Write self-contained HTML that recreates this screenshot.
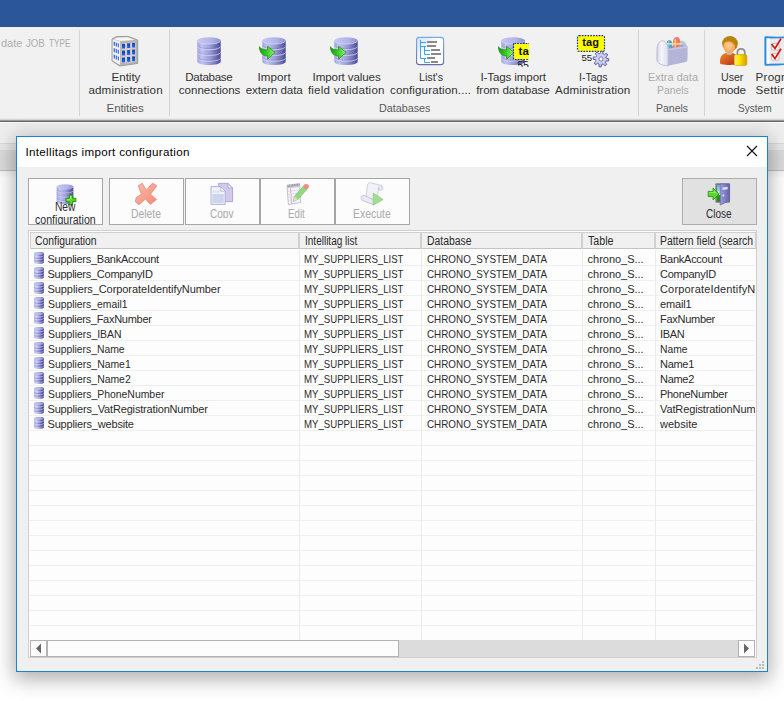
<!DOCTYPE html>
<html><head><meta charset="utf-8">
<style>
*{box-sizing:border-box;margin:0;padding:0}
html,body{width:784px;height:701px;overflow:hidden;background:#fff;font-family:"Liberation Sans",sans-serif;}
#root{position:relative;width:784px;height:701px;overflow:hidden;background:#fff}
.abs{position:absolute}
.t{position:absolute;white-space:nowrap;line-height:1;transform-origin:0 50%}
#topbar{left:0;top:0;width:784px;height:27px;background:#2b579a}
#ribbon{left:0;top:27px;width:784px;height:93px;background:#f1f1f1}
#ribline{left:0;top:118px;width:784px;height:5px;background:linear-gradient(#ebebeb 0 1px,#d6d6d6 1px 2px,#9c9c9c 2px 3px,#666 3px 4px,#f9f9f9 4px 5px)}
#under1{left:0;top:123px;width:784px;height:20px;background:linear-gradient(#ededed,#f1f1f1)}
#under1b{left:0;top:143px;width:784px;height:7px;background:#e9e9e9;border-top:1px solid #dadada}
#under2{left:0;top:150px;width:784px;height:21px;background:#dcdcdc;border-bottom:1px solid #bdbdbd}
#under3{left:0;top:171px;width:784px;height:8px;background:linear-gradient(#f3f3f3,#fff)}
.sep{position:absolute;top:30px;width:1px;height:86px;background:#d4d4d4}
#dlg{left:16px;top:136px;width:752px;height:536px;background:#f0f0f0;border:1px solid #1a82d8;box-shadow:0 5px 19px 2px rgba(0,0,0,0.33)}
#title{left:17px;top:137px;width:750px;height:30px;background:#fff}
.btn{position:absolute;top:178px;height:47px;width:75px;border:1px solid #a6a6a6;background:#fcfcfc}
#grid{left:28px;top:230px;width:729px;height:428px;background:#fdfdfd;border:1px solid #cfcfcf}
.hd{position:absolute;top:232px;height:17px;background:#f0f0f0;border:1px solid #d0d0d0;border-bottom-color:#c4c4c4}
.vl{position:absolute;top:250px;width:1px;height:390px;background:#ebebeb}
.hl{position:absolute;left:29px;width:726px;height:1px;background:#efefef}
.clip{position:absolute;left:0;top:0;overflow:hidden}
.clip .t{}
</style></head><body>
<div id="root">
<svg width="0" height="0" style="position:absolute">
<defs>
<linearGradient id="gdb" x1="0" x2="1" y1="0" y2="0"><stop offset="0" stop-color="#a2a4dc"/><stop offset=".2" stop-color="#c0c2f2"/><stop offset=".55" stop-color="#9a9cd6"/><stop offset="1" stop-color="#4a4a94"/></linearGradient>
<linearGradient id="gdbt" x1="0" x2="1" y1="0" y2="0"><stop offset="0" stop-color="#c4c6f2"/><stop offset=".6" stop-color="#b3b5ea"/><stop offset="1" stop-color="#8e90cc"/></linearGradient>
<linearGradient id="ggr" x1="0" x2="1" y1="0" y2="0"><stop offset="0" stop-color="#119a0c"/><stop offset=".5" stop-color="#3fcb2a"/><stop offset="1" stop-color="#92f56a"/></linearGradient>
<linearGradient id="glist" x1="0" x2="0" y1="0" y2="1"><stop offset="0" stop-color="#79a8ea"/><stop offset="1" stop-color="#666cb0"/></linearGradient>
<linearGradient id="glistf" x1="0" x2="1" y1="0" y2="1"><stop offset="0" stop-color="#cfe0fa"/><stop offset=".45" stop-color="#ffffff"/><stop offset="1" stop-color="#ffffff"/></linearGradient>
<linearGradient id="gsdb" x1="0" x2="1" y1="0" y2="0"><stop offset="0" stop-color="#a8aae4"/><stop offset=".22" stop-color="#c8caf6"/><stop offset=".55" stop-color="#8a8ccc"/><stop offset="1" stop-color="#363680"/></linearGradient>
<!-- big db cylinder 24x28, origin (0,0) -->
<g id="bdb">
 <path d="M0.3,3.4 V24.4 C0.3,26.6 5.5,28 12,28 C18.5,28 23.7,26.6 23.7,24.4 V3.4 Z" fill="url(#gdb)"/>
 <ellipse cx="12" cy="3.5" rx="11.7" ry="3.2" fill="url(#gdbt)"/>
 <path d="M0.5,3.9 C2,6.3 7,7 12,7 C17,7 22,6.3 23.5,3.9" fill="none" stroke="#dcdefa" stroke-width="0.9" opacity=".85"/>
 <g fill="none" stroke-width="1">
  <path d="M0.5,8.8 C2,11 7,11.6 12,11.6 C17,11.6 22,11 23.5,8.8" stroke="#6464ac" opacity=".28"/>
  <path d="M0.5,9.8 C2,12 7,12.6 12,12.6 C17,12.6 22,12 23.5,9.8" stroke="#d8daf8" opacity=".8"/>
  <path d="M0.5,14.6 C2,16.8 7,17.4 12,17.4 C17,17.4 22,16.8 23.5,14.6" stroke="#6464ac" opacity=".28"/>
  <path d="M0.5,15.6 C2,17.8 7,18.4 12,18.4 C17,18.4 22,17.8 23.5,15.6" stroke="#d8daf8" opacity=".8"/>
  <path d="M0.5,20.4 C2,22.6 7,23.2 12,23.2 C17,23.2 22,22.6 23.5,20.4" stroke="#6464ac" opacity=".28"/>
  <path d="M0.5,21.4 C2,23.6 7,24.2 12,24.2 C17,24.2 22,23.6 23.5,21.4" stroke="#d8daf8" opacity=".7"/>
 </g>
</g>
<!-- green arrow 16x13.5 origin (0,0): tail top-left curving to point right -->
<g id="garrow">
 <path d="M0.3,0.6 C2,3.6 5,4.2 8.6,3.8 V0.2 L16,6.4 L8.6,13.2 V9.6 C4.5,10.6 0.8,7.5 0.3,0.6 Z" fill="url(#ggr)" stroke="#15900f" stroke-width="0.7" stroke-linejoin="round"/>
</g>
<!-- small db 10x12 -->
<g id="sdb">
 <path d="M0.2,1.5 C0.2,0.5 2,0.1 5,0.1 C8,0.1 9.8,0.5 9.8,1.5 V10.2 C9.8,11.2 8,11.8 5,11.8 C2,11.8 0.2,11.2 0.2,10.2 Z" fill="url(#gsdb)"/>
 <ellipse cx="5" cy="1.6" rx="4.7" ry="1.4" fill="url(#gdbt)"/>
 <g fill="none" stroke-width=".9"><path d="M0.4,3.8 C1.4,4.7 3,4.9 5,4.9 C7,4.9 8.6,4.7 9.6,3.8" stroke="#dcdefa" opacity=".75"/>
 <path d="M0.4,6.5 C1.4,7.4 3,7.6 5,7.6 C7,7.6 8.6,7.4 9.6,6.5" stroke="#dcdefa" opacity=".7"/>
 <path d="M0.4,9.2 C1.4,10.1 3,10.3 5,10.3 C7,10.3 8.6,10.1 9.6,9.2" stroke="#dcdefa" opacity=".6"/>
 <path d="M0.4,5.6 C1.4,6.5 3,6.7 5,6.7 C7,6.7 8.6,6.5 9.6,5.6 M0.4,8.3 C1.4,9.2 3,9.4 5,9.4 C7,9.4 8.6,9.2 9.6,8.3" stroke="#5a5aa6" opacity=".35"/></g>
</g>
</defs></svg>

<div id="topbar" class="abs"></div>
<div id="ribbon" class="abs"></div>
<div id="ribline" class="abs"></div>
<div id="under1" class="abs"></div><div id="under1b" class="abs"></div>
<div id="under2" class="abs"></div><div id="under3" class="abs"></div>
<div class="sep" style="left:79px"></div><div class="sep" style="left:169px"></div>
<div class="sep" style="left:638px"></div><div class="sep" style="left:704px"></div>
<!-- Entity building -->
<svg class="abs" style="left:110px;top:34px" width="30" height="34" viewBox="110 34 30 34">
 <defs><linearGradient id="gbl" x1="0" x2="0" y1="0" y2="1"><stop offset="0" stop-color="#0a3fc8"/><stop offset="1" stop-color="#1a66ee"/></linearGradient></defs>
 <path d="M112,39 L116.5,36.6 L128,36.4 L137.7,40 L137.7,63.4 L119.6,66 L112,61 Z" fill="#b4b4b4" stroke="#8e8e8e" stroke-width=".8"/>
 <path d="M113.8,39.2 L117,37.5 L127.6,37.3 L135,40 L120.3,41 Z" fill="#f6f6f6"/>
 <path d="M112.6,39.2 L120.1,41.6 L120.1,65 L112.6,60.4 Z" fill="#f2f2f4"/>
 <path d="M120.9,41.6 L137,40.6 L137,62.8 L120.9,65 Z" fill="#b7b5b1"/><path d="M121.6,43.4 L135.6,42.4 L135.6,62 L121.6,63 Z" fill="#d6cdbf"/>
 <g fill="url(#gbl)">
  <rect x="122" y="43.9" width="3" height="4.6"/><rect x="127.1" y="43.4" width="3" height="4.6"/><rect x="132.1" y="42.9" width="2.9" height="4.6"/>
  <rect x="122" y="50.6" width="3" height="4.8"/><rect x="127.1" y="50.1" width="3" height="4.8"/><rect x="132.1" y="49.6" width="2.9" height="4.8"/>
  <rect x="122" y="57.6" width="3" height="4.8"/><rect x="127.1" y="57" width="3" height="4.8"/><rect x="132.1" y="56.4" width="2.9" height="4.8"/>
  <g opacity=".85"><path d="M113.7,41.6 l1.2,.4 v4 l-1.2,-.5z M115.7,42.4 l1.2,.4 v4 l-1.2,-.5z M117.7,43.2 l1.2,.4 v4 l-1.2,-.5z"/>
  <path d="M113.7,48 l1.2,.4 v4 l-1.2,-.5z M115.7,48.8 l1.2,.4 v4 l-1.2,-.5z M117.7,49.6 l1.2,.4 v4 l-1.2,-.5z"/>
  <path d="M113.7,54.4 l1.2,.5 v4 l-1.2,-.6z M115.7,55.3 l1.2,.5 v4 l-1.2,-.6z M117.7,56.2 l1.2,.5 v4 l-1.2,-.6z"/></g>
 </g>
</svg>
<!-- DB connections -->
<svg class="abs" style="left:197px;top:36.9px" width="24" height="28.5" viewBox="0 0 24 28.5"><use href="#bdb"/></svg>
<!-- Import extern -->
<svg class="abs" style="left:262px;top:36.9px" width="24" height="28.5" viewBox="0 0 24 28.5"><use href="#bdb"/></svg>
<svg class="abs" style="left:258.6px;top:45.8px" width="17" height="14" viewBox="0 0 17 14"><use href="#garrow"/></svg>
<!-- Import values -->
<svg class="abs" style="left:334px;top:36.9px" width="24" height="28.5" viewBox="0 0 24 28.5"><use href="#bdb"/></svg>
<svg class="abs" style="left:330.3px;top:45.8px" width="17" height="14" viewBox="0 0 17 14"><use href="#garrow"/></svg>
<!-- List's config -->
<svg class="abs" style="left:415px;top:36px" width="30" height="30" viewBox="415 36 30 30">
 <rect x="416.6" y="37.4" width="27" height="27.2" rx="2.6" fill="url(#glistf)" stroke="url(#glist)" stroke-width="1.1"/>
 <g stroke="#3ea2f4" stroke-width="1" fill="none"><path d="M420.5,40 V58.5 H426 M420.5,42.5 H426 M420.5,46.5 H426 M424.5,46.5 V54.5 H430 M424.5,50.5 H430 M424.5,58.5 V62.5 H430"/></g>
 <g fill="#8a8a8a"><rect x="427" y="41" width="10" height="2"/><rect x="427" y="45" width="9" height="2"/><rect x="431" y="49" width="9" height="2"/><rect x="431" y="53" width="10" height="2"/><rect x="427" y="57" width="8" height="2"/><rect x="431" y="61" width="7" height="2"/></g>
</svg>
<!-- I-Tags import -->
<svg class="abs" style="left:501px;top:36.9px" width="24" height="28.5" viewBox="0 0 24 28.5"><use href="#bdb"/></svg>
<svg class="abs" style="left:497.7px;top:45.8px" width="17" height="14" viewBox="0 0 17 14"><use href="#garrow"/></svg>
<svg class="abs" style="left:512px;top:42px" width="17" height="25" viewBox="512 42 17 25">
 <rect x="513.5" y="43.5" width="17" height="16" rx="1" fill="#ffff00" stroke="#0a2fa0" stroke-width="1.2" stroke-dasharray="1.6 1.2"/>
 <text x="518.6" y="55.4" font-family="Liberation Sans" font-weight="bold" font-size="11.5" fill="#111">ta</text>
 <text x="517.6" y="69.4" font-family="Liberation Sans" font-size="10" fill="#1a1a1a">55.</text>
</svg>
<!-- I-Tags Admin -->
<svg class="abs" style="left:575px;top:33px" width="36" height="35" viewBox="575 33 36 35">
 <rect x="577.5" y="35.6" width="27" height="15.8" rx="1.6" fill="#ffff00" stroke="#0a2fa0" stroke-width="1.2" stroke-dasharray="1.6 1.2"/>
 <text x="582.3" y="45.9" textLength="16.6" lengthAdjust="spacingAndGlyphs" font-family="Liberation Sans" font-weight="bold" font-size="11.6" fill="#111">tag</text>
 <text x="581.4" y="61" font-family="Liberation Sans" font-size="9.6" fill="#1a1a1a">55</text>
 <g transform="translate(601 59)">
  <path d="M-0.74,-5.35 L-0.19,-7.90 L2.02,-7.64 L1.97,-5.03 L3.26,-4.31 L5.45,-5.72 L6.83,-3.97 L4.95,-2.16 L5.35,-0.74 L7.90,-0.19 L7.64,2.02 L5.03,1.97 L4.31,3.26 L5.72,5.45 L3.97,6.83 L2.16,4.95 L0.74,5.35 L0.19,7.90 L-2.02,7.64 L-1.97,5.03 L-3.26,4.31 L-5.45,5.72 L-6.83,3.97 L-4.95,2.16 L-5.35,0.74 L-7.90,0.19 L-7.64,-2.02 L-5.03,-1.97 L-4.31,-3.26 L-5.72,-5.45 L-3.97,-6.83 L-2.16,-4.95 Z" fill="#c4c4e8" stroke="#5252a4" stroke-width=".9" stroke-linejoin="round"/>
  <path d="M-0.74,-5.35 L-0.19,-7.90 L2.02,-7.64 L1.97,-5.03 L3.26,-4.31 L5.45,-5.72 L6.83,-3.97 L4.95,-2.16 L5.35,-0.74 L7.90,-0.19 L7.64,2.02 L5.03,1.97 L4.31,3.26 L5.72,5.45 L3.97,6.83 L2.16,4.95 L0.74,5.35 L0.19,7.90 L-2.02,7.64 L-1.97,5.03 L-3.26,4.31 L-5.45,5.72 L-6.83,3.97 L-4.95,2.16 L-5.35,0.74 L-7.90,0.19 L-7.64,-2.02 L-5.03,-1.97 L-4.31,-3.26 L-5.72,-5.45 L-3.97,-6.83 L-2.16,-4.95 Z" fill="#d8d8f4" opacity=".6" transform="scale(.72) translate(-1,-1)"/>
  <circle r="2.1" fill="#fdfdff" stroke="#6c6cb4" stroke-width=".9"/>
 </g>
</svg>
<!-- Toolbox (disabled) -->
<svg class="abs" style="left:655px;top:34px" width="35" height="34" viewBox="655 34 35 34">
 <defs><linearGradient id="gcap" x1="0" x2="1"><stop offset="0" stop-color="#d2d2e8"/><stop offset=".4" stop-color="#f6f6fc"/><stop offset="1" stop-color="#dcdcee"/></linearGradient></defs>
 <path d="M675,52 C675,43 678.6,40.8 681.6,40.8 C685.6,41 687.4,45 687.4,49 V58 L675,58 Z" fill="#c2c2de"/>
 <path d="M667,49 L678.2,43 C680,44.4 683.4,45.4 686.8,46.2 L668,51Z" fill="#a2a2c8"/>
 <path d="M666.9,42 C666.9,39.8 671.7,39.8 671.9,42 L672.6,50 H667.4 Z" fill="#4aa4de"/><path d="M668,41.6 c.2,-.8 .8,-.8 1,0 l.3,8.4 h-1z" fill="#8ccaee"/>
 <path d="M672.9,42.4 C672.9,35.2 680.6,35.2 680.2,42.4 L678,49.6 H674 Z" fill="#f07c66"/><path d="M674.6,40.6 c.3,-2.6 1.5,-2.6 1.4,0 l-.5,8.4 h-.9z" fill="#fbd0c4"/>
 <rect x="667" y="43" width="14.8" height="1.7" fill="#f0dc74"/>
 <path d="M667,48.9 L687.4,46 V60 C687.4,61 686.8,61.8 685.8,62 L667,65.9 Z" fill="#b4b4d8"/>
 <path d="M667,48.9 L687.4,46 V47.4 L667,50.4 Z" fill="#c8c8e6"/>
 <path d="M656.9,50.4 C656.9,37.6 668.2,37.6 668.2,50.4 V65.9 C662,65.7 656.9,63 656.9,60Z" fill="url(#gcap)" stroke="#b4b4d6" stroke-width=".8"/>
</svg>
<!-- User mode -->
<svg class="abs" style="left:718px;top:34px" width="31" height="33" viewBox="718 34 31 33">
 <defs><linearGradient id="gbody" x1="0" x2="1" y1="0" y2="1"><stop offset="0" stop-color="#f28a2a"/><stop offset="1" stop-color="#b92a12"/></linearGradient>
 <radialGradient id="gface" cx=".45" cy=".45" r=".6"><stop offset="0" stop-color="#ffd39a"/><stop offset="1" stop-color="#f79a4c"/></radialGradient>
 <linearGradient id="glock" x1="0" x2="1" y1="0" y2="0"><stop offset="0" stop-color="#fff27a"/><stop offset=".4" stop-color="#ffe400"/><stop offset="1" stop-color="#d49c00"/></linearGradient></defs>
 <path d="M720,63 C719.6,56 723,52.6 729.4,52.6 C735.6,52.6 738,56 738,63 C738,65.6 720,65.6 720,63 Z" fill="url(#gbody)"/>
 <path d="M726.6,52.4 h5.6 l-.6,2.4 h-4.4z" fill="#a8c8e2"/>
 <ellipse cx="730" cy="43.6" rx="7.9" ry="7.6" fill="#b9840c"/>
 <ellipse cx="729.3" cy="46.4" rx="5.8" ry="6.8" fill="url(#gface)"/>
 <path d="M722.4,44 C723,38 729,36.4 733.6,39 C737,41 737.6,45 736.6,48.6 C735,45 733,42 729,41.6 C726,41.4 724,42.4 722.4,44 Z" fill="#b9840c"/>
 <path d="M737.4,56 V52.6 C737.4,47.6 744.8,47.6 744.8,52.6 V56" fill="none" stroke="#8e8e8e" stroke-width="1.7"/>
 <rect x="734.2" y="54.6" width="12.6" height="10.8" rx="1.6" fill="url(#glock)" stroke="#c89600" stroke-width=".6"/>
</svg>
<!-- Program settings (cut) -->
<svg class="abs" style="left:763px;top:35px" width="21" height="32" viewBox="763 35 21 32">
 <path d="M764.4,38 C764.4,36.6 765,36.2 766.4,36.2 L778,36.8 L784,36.4 V65 L778,65.6 L766,65.8 C764.8,65.8 764.4,65 764.4,64 Z" fill="#2a8ce2"/>
 <path d="M766.6,38.4 L784,38.2 V63.4 L766.6,63.8 Z" fill="#ebebeb"/>
 <path d="M766.6,38.4 h3 V63.7 h-3z" fill="#fafafa"/>
 <rect x="771.6" y="43.4" width="7.4" height="6.6" rx="1" fill="#f6f6f6" stroke="#b9b9b9" stroke-width=".9"/>
 <rect x="771.6" y="53.4" width="7.4" height="6.8" rx="1" fill="#f6f6f6" stroke="#b9b9b9" stroke-width=".9"/>
 <path d="M771.6,44 L775,48.4 L781,38.6" fill="none" stroke="#d41414" stroke-width="1.7"/>
 <path d="M771.6,54 L775,58.6 L781,48.8" fill="none" stroke="#d41414" stroke-width="1.7"/>
</svg>

<div id="dlg" class="abs"></div>
<div id="title" class="abs"></div>
<svg class="abs" style="left:746px;top:145px" width="12" height="12" viewBox="0 0 12 12"><path d="M1,1 L11,11 M11,1 L1,11" stroke="#111" stroke-width="1.1" fill="none"/></svg>
<div class="btn" style="left:28px"></div>
<div class="btn" style="left:109px"></div>
<div class="btn" style="left:185px"></div>
<div class="btn" style="left:260px"></div>
<div class="btn" style="left:335px"></div>
<div class="btn" style="left:682px;background:#e1e1e1;border-color:#adadad"></div>
<!-- New: db + plus -->
<svg class="abs" style="left:56px;top:184px" width="18" height="20" viewBox="0 0 24 28"><use href="#bdb"/></svg>
<svg class="abs" style="left:65px;top:194px" width="12" height="12" viewBox="0 0 12 12"><path d="M4.2,1 h3.4 v3.3 h3.3 v3.4 h-3.3 v3.3 h-3.4 v-3.3 h-3.3 v-3.4 h3.3z" fill="#5bd02a" stroke="#1f8c0c" stroke-width=".9" stroke-linejoin="round"/><path d="M5,2 h1.6 v3.2 h-1.6z M1.8,5 h3.2 v1.4 h-3.2z" fill="#a6f07c" opacity=".8"/></svg>
<!-- Delete X -->
<svg class="abs" style="left:134px;top:182px" width="25" height="24" viewBox="134 182 25 24">
 <defs><linearGradient id="gdel" x1="0" x2="1" y1="0" y2="1"><stop offset="0" stop-color="#fcc0ae"/><stop offset=".5" stop-color="#f8a28e"/><stop offset="1" stop-color="#f28a76"/></linearGradient></defs>
 <path d="M142.3,183.3 L146.4,190.2 L152.5,183.2 L156.8,185.8 L150.5,194.3 L156.5,199.4 L150.6,204.4 L145.4,198.9 L140.6,203.6 L138.2,204.6 L135.3,201.5 L136.3,197.6 L141.3,194.3 L138.3,185.5 Z" fill="url(#gdel)" stroke="#ea8682" stroke-width=".8" stroke-linejoin="round"/>
</svg>
<!-- Copy -->
<svg class="abs" style="left:209px;top:181px" width="26" height="26" viewBox="209 181 26 26">
 <path d="M218.6,183.4 H228 L232.6,188 V201.6 H218.6 Z" fill="#d2caec" stroke="#a8a0d0" stroke-width=".9"/>
 <path d="M228,183.4 V188 H232.6 Z" fill="#ece8f8" stroke="#a8a0d0" stroke-width=".7"/>
 <path d="M211,186.6 H220.6 L225.2,191.2 V204.4 H211 Z" fill="#eef2fa" stroke="#a4acd0" stroke-width=".9"/>
 <path d="M220.6,186.6 V191.2 H225.2 Z" fill="#fafaff" stroke="#a4acd0" stroke-width=".7"/>
 <rect x="212.4" y="194" width="11.4" height="9" fill="#cdd4ee"/><rect x="212.4" y="190.6" width="7" height="2" fill="#dfe4f4"/>
</svg>
<!-- Edit -->
<svg class="abs" style="left:284px;top:181px" width="27" height="26" viewBox="284 181 27 26">
 <path d="M287,185.6 L299.6,184 L300.8,202.4 L288.4,204.6 Z" fill="#f4f4fc" stroke="#b9b9d8" stroke-width=".9"/>
 <path d="M287,185.6 L299.6,184 L299.8,187 L287.2,188.6 Z" fill="#c9c9d4"/>
 <path d="M290.6,188.4 L291.6,204" stroke="#f2a090" stroke-width=".9"/>
 <g stroke="#c8d0f0" stroke-width=".7"><path d="M288,191.4 L300,190 M288.2,194.4 L300.2,193 M288.4,197.4 L300.4,196 M288.6,200.4 L300.6,199"/></g>
 <g stroke="#8a8a96" stroke-width=".8"><path d="M288,184.6 v2.4 M289.6,184.4 v2.4 M291.2,184.2 v2.4 M292.8,184 v2.4 M294.4,183.8 v2.4 M296,183.6 v2.4 M297.6,183.4 v2.4 M299.2,183.2 v2.4"/></g>
 <path d="M304,185.4 L307.6,188.6 L297.6,199.4 L293.4,201.4 L294.4,196.6 Z" fill="#96d880" stroke="#6cb860" stroke-width=".7"/>
 <path d="M293.4,201.4 L294.4,196.6 L297.6,199.4 Z" fill="#e8dcc8"/>
 <ellipse cx="306.2" cy="186.4" rx="2.6" ry="2.4" fill="#f08c80"/>
</svg>
<!-- Execute -->
<svg class="abs" style="left:359px;top:181px" width="27" height="26" viewBox="359 181 27 26">
 <path d="M367.4,185.4 C367.4,182.4 371,182.6 372,183.2 L381.4,185.4 C383.6,186.4 383.6,190.4 380.4,190.4 C378,190.4 378.6,187.4 378.6,187.4 L377,201.6 L366,198 Z" fill="#f1f1f9" stroke="#c4c4dc" stroke-width=".8"/>
 <circle cx="380.6" cy="187.6" r="1.3" fill="#fff" stroke="#b4b4d4" stroke-width=".6"/>
 <path d="M362.6,195.6 C360.6,196.4 360.6,199.4 362.6,200.4 L373,204.6 C375.6,205.4 376.6,201.6 374.6,200.2 L364.6,195.6 Z" fill="#eaeaf4" stroke="#b8b8d0" stroke-width=".8"/>
 <path d="M373.2,193.2 L383.2,199.4 L373.2,205.2 Z" fill="#a2de92" stroke="#86cc78" stroke-width=".7" stroke-linejoin="round"/>
</svg>
<!-- Close door -->
<svg class="abs" style="left:706px;top:181px" width="27" height="26" viewBox="706 181 27 26">
 <defs><linearGradient id="gsky" x1="0" x2="0" y1="0" y2="1"><stop offset="0" stop-color="#58b4f0"/><stop offset=".6" stop-color="#e8f6ff"/><stop offset=".62" stop-color="#2aa01c"/><stop offset="1" stop-color="#178a10"/></linearGradient>
 <linearGradient id="gdoor" x1="0" x2="1" y1="0" y2="0"><stop offset="0" stop-color="#9a9adc"/><stop offset="1" stop-color="#6464b0"/></linearGradient></defs>
 <rect x="715.4" y="183.2" width="14.6" height="19.6" rx="1" fill="#7c7c7c"/>
 <rect x="717.2" y="185" width="4.6" height="16.6" fill="url(#gsky)"/>
 <path d="M720.2,184 L729.6,184 V200.8 L720.2,205 Z" fill="url(#gdoor)" stroke="#5c5ca4" stroke-width=".6"/>
 <path d="M722.6,187.4 L727.6,187 V189.2 L722.6,189.8 Z" fill="#e4e4fa"/>
 <circle cx="723.4" cy="195.4" r="1" fill="#e8e8f4"/>
 <path d="M708.2,191.4 H713 V188 L719.2,194 L713,200 V196.6 H708.2 Z" fill="#5ad62c" stroke="#1c9410" stroke-width=".8" stroke-linejoin="round"/>
 <path d="M709,192.2 H713.8 V190 L716.6,193 H709 Z" fill="#a4f47a" opacity=".8"/>
</svg>

<div id="grid" class="abs"></div>
<div class="hd" style="left:30px;width:269px"></div><div class="hd" style="left:299px;width:122px"></div><div class="hd" style="left:421px;width:161px"></div><div class="hd" style="left:582px;width:73px"></div><div class="hd" style="left:655px;width:101px"></div>
<div class="hl" style="top:265px"></div><div class="hl" style="top:280px"></div><div class="hl" style="top:295px"></div><div class="hl" style="top:310px"></div><div class="hl" style="top:325px"></div><div class="hl" style="top:340px"></div><div class="hl" style="top:355px"></div><div class="hl" style="top:370px"></div><div class="hl" style="top:385px"></div><div class="hl" style="top:400px"></div><div class="hl" style="top:415px"></div><div class="hl" style="top:430px"></div><div class="hl" style="top:445px"></div><div class="hl" style="top:460px"></div><div class="hl" style="top:475px"></div><div class="hl" style="top:490px"></div><div class="hl" style="top:505px"></div><div class="hl" style="top:520px"></div><div class="hl" style="top:535px"></div><div class="hl" style="top:550px"></div><div class="hl" style="top:565px"></div><div class="hl" style="top:580px"></div><div class="hl" style="top:595px"></div><div class="hl" style="top:610px"></div><div class="hl" style="top:625px"></div><div class="vl" style="left:299px"></div><div class="vl" style="left:421px"></div><div class="vl" style="left:582px"></div><div class="vl" style="left:655px"></div>
<svg class="abs" style="left:34px;top:252px" width="11" height="12" viewBox="0 0 11 12"><use href="#sdb"/></svg><svg class="abs" style="left:34px;top:267px" width="11" height="12" viewBox="0 0 11 12"><use href="#sdb"/></svg><svg class="abs" style="left:34px;top:282px" width="11" height="12" viewBox="0 0 11 12"><use href="#sdb"/></svg><svg class="abs" style="left:34px;top:297px" width="11" height="12" viewBox="0 0 11 12"><use href="#sdb"/></svg><svg class="abs" style="left:34px;top:312px" width="11" height="12" viewBox="0 0 11 12"><use href="#sdb"/></svg><svg class="abs" style="left:34px;top:327px" width="11" height="12" viewBox="0 0 11 12"><use href="#sdb"/></svg><svg class="abs" style="left:34px;top:342px" width="11" height="12" viewBox="0 0 11 12"><use href="#sdb"/></svg><svg class="abs" style="left:34px;top:357px" width="11" height="12" viewBox="0 0 11 12"><use href="#sdb"/></svg><svg class="abs" style="left:34px;top:372px" width="11" height="12" viewBox="0 0 11 12"><use href="#sdb"/></svg><svg class="abs" style="left:34px;top:387px" width="11" height="12" viewBox="0 0 11 12"><use href="#sdb"/></svg><svg class="abs" style="left:34px;top:402px" width="11" height="12" viewBox="0 0 11 12"><use href="#sdb"/></svg><svg class="abs" style="left:34px;top:417px" width="11" height="12" viewBox="0 0 11 12"><use href="#sdb"/></svg>
<!-- scrollbar -->
<div class="abs" style="left:30px;top:640px;width:725px;height:17px;background:#dcdcdc"></div>
<div class="abs" style="left:30px;top:640px;width:17px;height:17px;background:#fdfdfd;border:1px solid #b2b2b2"></div>
<div class="abs" style="left:47px;top:640px;width:352px;height:17px;background:#fdfdfd;border:1px solid #b2b2b2"></div>
<div class="abs" style="left:738px;top:640px;width:17px;height:17px;background:#fdfdfd;border:1px solid #b2b2b2"></div>
<svg class="abs" style="left:30px;top:640px" width="17" height="17"><path d="M11,3.6 L6,8.5 L11,13.4 Z" fill="#666"/></svg>
<svg class="abs" style="left:738px;top:640px" width="17" height="17"><path d="M6,3.6 L11,8.5 L6,13.4 Z" fill="#666"/></svg>
<!-- grip -->
<svg class="abs" style="left:756px;top:661px" width="10" height="10"><g fill="#bcbcbc"><rect x="6" y="0" width="2" height="2"/><rect x="3" y="3" width="2" height="2"/><rect x="6" y="3" width="2" height="2"/><rect x="0" y="6" width="2" height="2"/><rect x="3" y="6" width="2" height="2"/><rect x="6" y="6" width="2" height="2"/></g></svg>
<span class="t" style="left:1.0px;top:37.48px;font-size:11.6px;color:#adadad;transform:scaleX(0.9439);">date</span><span class="t" style="left:26.1px;top:37.48px;font-size:11.6px;color:#adadad;transform:scaleX(0.8338);">JOB</span><span class="t" style="left:49.1px;top:37.48px;font-size:11.6px;color:#adadad;transform:scaleX(0.7067);">TYPE</span><span class="t" style="left:111.6px;top:71.18px;font-size:11.6px;color:#333;letter-spacing:-0.049px;">Entity</span><span class="t" style="left:88.4px;top:84.18px;font-size:11.6px;color:#333;letter-spacing:0.159px;">administration</span><span class="t" style="left:106.6px;top:102.18px;font-size:11.6px;color:#595959;letter-spacing:-0.127px;">Entities</span><span class="t" style="left:185.3px;top:71.18px;font-size:11.6px;color:#333;letter-spacing:-0.304px;">Database</span><span class="t" style="left:178.8px;top:84.18px;font-size:11.6px;color:#333;letter-spacing:-0.025px;">connections</span><span class="t" style="left:257.4px;top:71.18px;font-size:11.6px;color:#333;letter-spacing:0.107px;">Import</span><span class="t" style="left:245.7px;top:84.18px;font-size:11.6px;color:#333;letter-spacing:-0.092px;">extern data</span><span class="t" style="left:312.6px;top:71.18px;font-size:11.6px;color:#333;letter-spacing:-0.122px;">Import values</span><span class="t" style="left:307.9px;top:84.18px;font-size:11.6px;color:#333;letter-spacing:0.208px;">field validation</span><span class="t" style="left:419.1px;top:71.18px;font-size:11.6px;color:#333;transform:scaleX(0.9212);">List's</span><span class="t" style="left:390.0px;top:84.18px;font-size:11.6px;color:#333;letter-spacing:0.113px;">configuration....</span><span class="t" style="left:480.5px;top:71.18px;font-size:11.6px;color:#333;letter-spacing:-0.131px;">I-Tags import</span><span class="t" style="left:476.2px;top:84.18px;font-size:11.6px;color:#333;letter-spacing:-0.040px;">from database</span><span class="t" style="left:579.3px;top:71.18px;font-size:11.6px;color:#333;transform:scaleX(0.9059);">I-Tags</span><span class="t" style="left:555.1px;top:84.18px;font-size:11.6px;color:#333;letter-spacing:0.132px;">Administration</span><span class="t" style="left:379.0px;top:102.18px;font-size:11.6px;color:#595959;transform:scaleX(0.9292);">Databases</span><span class="t" style="left:647.5px;top:71.18px;font-size:11.6px;color:#ababab;transform:scaleX(0.9462);">Extra data</span><span class="t" style="left:656.7px;top:84.18px;font-size:11.6px;color:#ababab;transform:scaleX(0.8914);">Panels</span><span class="t" style="left:655.6px;top:102.18px;font-size:11.6px;color:#595959;transform:scaleX(0.9055);">Panels</span><span class="t" style="left:720.7px;top:71.18px;font-size:11.6px;color:#333;transform:scaleX(0.9110);">User</span><span class="t" style="left:717.5px;top:84.18px;font-size:11.6px;color:#333;letter-spacing:-0.175px;">mode</span><span class="t" style="left:755.6px;top:71.18px;font-size:11.6px;color:#333;letter-spacing:0.221px;">Program</span><span class="t" style="left:755.6px;top:84.18px;font-size:11.6px;color:#333;letter-spacing:0.264px;">Settings</span><span class="t" style="left:737.7px;top:102.18px;font-size:11.6px;color:#595959;transform:scaleX(0.8693);">System</span><span class="t" style="left:25.5px;top:146.18px;font-size:11.6px;color:#000;letter-spacing:0.318px;">Intellitags import configuration</span><span class="t" style="left:54.7px;top:200.64px;font-size:12px;color:#2c2c34;transform:scaleX(0.8498);">New</span><span class="t" style="left:131.4px;top:207.74px;font-size:12px;color:#a9a9ae;transform:scaleX(0.8649);">Delete</span><span class="t" style="left:288.2px;top:207.74px;font-size:12px;color:#a9a9ae;transform:scaleX(0.8125);">Edit</span><span class="t" style="left:353.4px;top:207.74px;font-size:12px;color:#a9a9ae;transform:scaleX(0.8718);">Execute</span><span class="t" style="left:705.5px;top:207.74px;font-size:12px;color:#2c2c34;transform:scaleX(0.8312);">Close</span><span class="t" style="left:34.5px;top:234.64px;font-size:12px;color:#2a2a2a;transform:scaleX(0.8630);">Configuration</span><span class="t" style="left:304.7px;top:234.64px;font-size:12px;color:#2a2a2a;transform:scaleX(0.8342);">Intellitag list</span><span class="t" style="left:426.8px;top:234.64px;font-size:12px;color:#2a2a2a;transform:scaleX(0.8643);">Database</span><span class="t" style="left:587.9px;top:234.64px;font-size:12px;color:#2a2a2a;transform:scaleX(0.8854);">Table</span><span class="t" style="left:47.5px;top:253.59px;font-size:11px;color:#2b2b2b;letter-spacing:-0.262px;">Suppliers_BankAccount</span><span class="t" style="left:304.3px;top:253.59px;font-size:11px;color:#2b2b2b;transform:scaleX(0.8750);">MY_SUPPLIERS_LIST</span><span class="t" style="left:426.8px;top:253.59px;font-size:11px;color:#2b2b2b;transform:scaleX(0.8959);">CHRONO_SYSTEM_DATA</span><span class="t" style="left:587.6px;top:253.59px;font-size:11px;color:#2b2b2b;letter-spacing:-0.023px;">chrono_S...</span><span class="t" style="left:47.5px;top:268.59px;font-size:11px;color:#2b2b2b;letter-spacing:-0.261px;">Suppliers_CompanyID</span><span class="t" style="left:304.3px;top:268.59px;font-size:11px;color:#2b2b2b;transform:scaleX(0.8750);">MY_SUPPLIERS_LIST</span><span class="t" style="left:426.8px;top:268.59px;font-size:11px;color:#2b2b2b;transform:scaleX(0.8959);">CHRONO_SYSTEM_DATA</span><span class="t" style="left:587.6px;top:268.59px;font-size:11px;color:#2b2b2b;letter-spacing:-0.023px;">chrono_S...</span><span class="t" style="left:47.5px;top:283.59px;font-size:11px;color:#2b2b2b;letter-spacing:-0.075px;">Suppliers_CorporateIdentifyNumber</span><span class="t" style="left:304.3px;top:283.59px;font-size:11px;color:#2b2b2b;transform:scaleX(0.8750);">MY_SUPPLIERS_LIST</span><span class="t" style="left:426.8px;top:283.59px;font-size:11px;color:#2b2b2b;transform:scaleX(0.8959);">CHRONO_SYSTEM_DATA</span><span class="t" style="left:587.6px;top:283.59px;font-size:11px;color:#2b2b2b;letter-spacing:-0.023px;">chrono_S...</span><span class="t" style="left:47.5px;top:298.59px;font-size:11px;color:#2b2b2b;transform:scaleX(0.9434);">Suppliers_email1</span><span class="t" style="left:304.3px;top:298.59px;font-size:11px;color:#2b2b2b;transform:scaleX(0.8750);">MY_SUPPLIERS_LIST</span><span class="t" style="left:426.8px;top:298.59px;font-size:11px;color:#2b2b2b;transform:scaleX(0.8959);">CHRONO_SYSTEM_DATA</span><span class="t" style="left:587.6px;top:298.59px;font-size:11px;color:#2b2b2b;letter-spacing:-0.023px;">chrono_S...</span><span class="t" style="left:47.5px;top:313.59px;font-size:11px;color:#2b2b2b;letter-spacing:-0.281px;">Suppliers_FaxNumber</span><span class="t" style="left:304.3px;top:313.59px;font-size:11px;color:#2b2b2b;transform:scaleX(0.8750);">MY_SUPPLIERS_LIST</span><span class="t" style="left:426.8px;top:313.59px;font-size:11px;color:#2b2b2b;transform:scaleX(0.8959);">CHRONO_SYSTEM_DATA</span><span class="t" style="left:587.6px;top:313.59px;font-size:11px;color:#2b2b2b;letter-spacing:-0.023px;">chrono_S...</span><span class="t" style="left:47.5px;top:328.59px;font-size:11px;color:#2b2b2b;transform:scaleX(0.9466);">Suppliers_IBAN</span><span class="t" style="left:304.3px;top:328.59px;font-size:11px;color:#2b2b2b;transform:scaleX(0.8750);">MY_SUPPLIERS_LIST</span><span class="t" style="left:426.8px;top:328.59px;font-size:11px;color:#2b2b2b;transform:scaleX(0.8959);">CHRONO_SYSTEM_DATA</span><span class="t" style="left:587.6px;top:328.59px;font-size:11px;color:#2b2b2b;letter-spacing:-0.023px;">chrono_S...</span><span class="t" style="left:47.5px;top:343.59px;font-size:11px;color:#2b2b2b;transform:scaleX(0.9420);">Suppliers_Name</span><span class="t" style="left:304.3px;top:343.59px;font-size:11px;color:#2b2b2b;transform:scaleX(0.8750);">MY_SUPPLIERS_LIST</span><span class="t" style="left:426.8px;top:343.59px;font-size:11px;color:#2b2b2b;transform:scaleX(0.8959);">CHRONO_SYSTEM_DATA</span><span class="t" style="left:587.6px;top:343.59px;font-size:11px;color:#2b2b2b;letter-spacing:-0.023px;">chrono_S...</span><span class="t" style="left:47.5px;top:358.59px;font-size:11px;color:#2b2b2b;transform:scaleX(0.9458);">Suppliers_Name1</span><span class="t" style="left:304.3px;top:358.59px;font-size:11px;color:#2b2b2b;transform:scaleX(0.8750);">MY_SUPPLIERS_LIST</span><span class="t" style="left:426.8px;top:358.59px;font-size:11px;color:#2b2b2b;transform:scaleX(0.8959);">CHRONO_SYSTEM_DATA</span><span class="t" style="left:587.6px;top:358.59px;font-size:11px;color:#2b2b2b;letter-spacing:-0.023px;">chrono_S...</span><span class="t" style="left:47.5px;top:373.59px;font-size:11px;color:#2b2b2b;transform:scaleX(0.9458);">Suppliers_Name2</span><span class="t" style="left:304.3px;top:373.59px;font-size:11px;color:#2b2b2b;transform:scaleX(0.8750);">MY_SUPPLIERS_LIST</span><span class="t" style="left:426.8px;top:373.59px;font-size:11px;color:#2b2b2b;transform:scaleX(0.8959);">CHRONO_SYSTEM_DATA</span><span class="t" style="left:587.6px;top:373.59px;font-size:11px;color:#2b2b2b;letter-spacing:-0.023px;">chrono_S...</span><span class="t" style="left:47.5px;top:388.59px;font-size:11px;color:#2b2b2b;transform:scaleX(0.9471);">Suppliers_PhoneNumber</span><span class="t" style="left:304.3px;top:388.59px;font-size:11px;color:#2b2b2b;transform:scaleX(0.8750);">MY_SUPPLIERS_LIST</span><span class="t" style="left:426.8px;top:388.59px;font-size:11px;color:#2b2b2b;transform:scaleX(0.8959);">CHRONO_SYSTEM_DATA</span><span class="t" style="left:587.6px;top:388.59px;font-size:11px;color:#2b2b2b;letter-spacing:-0.023px;">chrono_S...</span><span class="t" style="left:47.5px;top:403.59px;font-size:11px;color:#2b2b2b;letter-spacing:-0.171px;">Suppliers_VatRegistrationNumber</span><span class="t" style="left:304.3px;top:403.59px;font-size:11px;color:#2b2b2b;transform:scaleX(0.8750);">MY_SUPPLIERS_LIST</span><span class="t" style="left:426.8px;top:403.59px;font-size:11px;color:#2b2b2b;transform:scaleX(0.8959);">CHRONO_SYSTEM_DATA</span><span class="t" style="left:587.6px;top:403.59px;font-size:11px;color:#2b2b2b;letter-spacing:-0.023px;">chrono_S...</span><span class="t" style="left:47.5px;top:418.59px;font-size:11px;color:#2b2b2b;letter-spacing:-0.175px;">Suppliers_website</span><span class="t" style="left:304.3px;top:418.59px;font-size:11px;color:#2b2b2b;transform:scaleX(0.8750);">MY_SUPPLIERS_LIST</span><span class="t" style="left:426.8px;top:418.59px;font-size:11px;color:#2b2b2b;transform:scaleX(0.8959);">CHRONO_SYSTEM_DATA</span><span class="t" style="left:587.6px;top:418.59px;font-size:11px;color:#2b2b2b;letter-spacing:-0.023px;">chrono_S...</span>
<div class="clip" style="width:103px;height:224px"><span class="t" style="left:34.6px;top:214.44px;font-size:12px;color:#2c2c34;transform:scaleX(0.8834);">configuration</span></div>
<div class="clip" style="width:300px;height:218px"><span class="t" style="left:210.0px;top:207.74px;font-size:12px;color:#a9a9ae;transform:scaleX(0.8389);">Copy</span></div>
<div class="clip" style="width:755px;height:640px"><span class="t" style="left:660.2px;top:234.64px;font-size:12px;color:#2a2a2a;transform:scaleX(0.8670);">Pattern field (search</span><span class="t" style="left:660.0px;top:253.59px;font-size:11px;color:#2b2b2b;letter-spacing:-0.256px;">BankAccount</span><span class="t" style="left:660.0px;top:268.59px;font-size:11px;color:#2b2b2b;letter-spacing:-0.231px;">CompanyID</span><span class="t" style="left:660.0px;top:283.59px;font-size:11px;color:#2b2b2b;letter-spacing:0.174px;">CorporateIdentifyNumber</span><span class="t" style="left:660.0px;top:298.59px;font-size:11px;color:#2b2b2b;letter-spacing:-0.151px;">email1</span><span class="t" style="left:660.0px;top:313.59px;font-size:11px;color:#2b2b2b;letter-spacing:-0.273px;">FaxNumber</span><span class="t" style="left:660.0px;top:328.59px;font-size:11px;color:#2b2b2b;letter-spacing:-0.293px;">IBAN</span><span class="t" style="left:660.0px;top:343.59px;font-size:11px;color:#2b2b2b;transform:scaleX(0.9372);">Name</span><span class="t" style="left:660.0px;top:358.59px;font-size:11px;color:#2b2b2b;letter-spacing:-0.292px;">Name1</span><span class="t" style="left:660.0px;top:373.59px;font-size:11px;color:#2b2b2b;letter-spacing:-0.292px;">Name2</span><span class="t" style="left:660.0px;top:388.59px;font-size:11px;color:#2b2b2b;letter-spacing:-0.312px;">PhoneNumber</span><span class="t" style="left:660.0px;top:403.59px;font-size:11px;color:#2b2b2b;letter-spacing:-0.120px;">VatRegistrationNumber</span><span class="t" style="left:660.0px;top:418.59px;font-size:11px;color:#2b2b2b;letter-spacing:0.029px;">website</span></div>
</div>
</body></html>
